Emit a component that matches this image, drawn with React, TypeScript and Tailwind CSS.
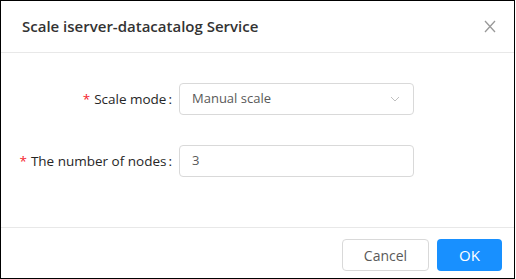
function ChevronDown() {
  return (
    <svg width="10" height="6" viewBox="0 0 10 6" fill="none" className="text-[#c0c0c0]">
      <path d="M1 1 L5 5 L9 1" stroke="currentColor" strokeWidth="1" />
    </svg>
  )
}

function CloseIcon() {
  return (
    <svg width="12" height="13" viewBox="0 0 12 13" fill="none" className="text-[#999999]">
      <path d="M1 1 L11 12 M11 1 L1 12" stroke="currentColor" strokeWidth="1.3" />
    </svg>
  )
}

function Label({ text }: { text: string }) {
  return (
    <div className="flex items-center justify-end text-[13.5px] text-[#262626]">
      <span className="mr-[4px] text-[#f5222d]">*</span>
      <span>{text}</span>
      <span className="ml-[2px] mr-[7px]">:</span>
    </div>
  )
}

export default function App() {
  return (
    <div
      className="flex h-[279px] w-[515px] flex-col border border-black bg-white"
      style={{ fontFamily: '"Open Sans", "Noto Sans", sans-serif' }}
    >
      <div className="flex h-[52px] shrink-0 items-center justify-between border-b border-[#e8e8e8] pl-[21px] pr-[18px]">
        <span className="text-[15px] font-semibold text-[#333333]">Scale iserver-datacatalog Service</span>
        <CloseIcon />
      </div>

      <div className="flex-1 pt-[30px]">
        <div className="grid grid-cols-[178px_235px] gap-y-[30px]">
          <Label text="Scale mode" />
          <div className="flex h-[32px] items-center justify-between rounded-[4px] border border-[#d9d9d9] pl-[12px] pr-[13px] text-[13px] text-[#595959]">
            <span>Manual scale</span>
            <ChevronDown />
          </div>
          <Label text="The number of nodes" />
          <div className="flex h-[32px] items-center rounded-[4px] border border-[#d9d9d9] pl-[12px] text-[13px] text-[#595959]">
            3
          </div>
        </div>
      </div>

      <div className="flex h-[51px] shrink-0 items-start justify-end gap-[8px] border-t border-[#e8e8e8] pr-[12px] pt-[11px]">
        <button className="h-[32px] w-[87px] rounded-[4px] border border-[#d9d9d9] bg-white text-[14px] text-[#595959]">
          Cancel
        </button>
        <button className="h-[32px] w-[65px] rounded-[4px] bg-[#1890ff] text-[15px] text-white">
          OK
        </button>
      </div>
    </div>
  )
}
